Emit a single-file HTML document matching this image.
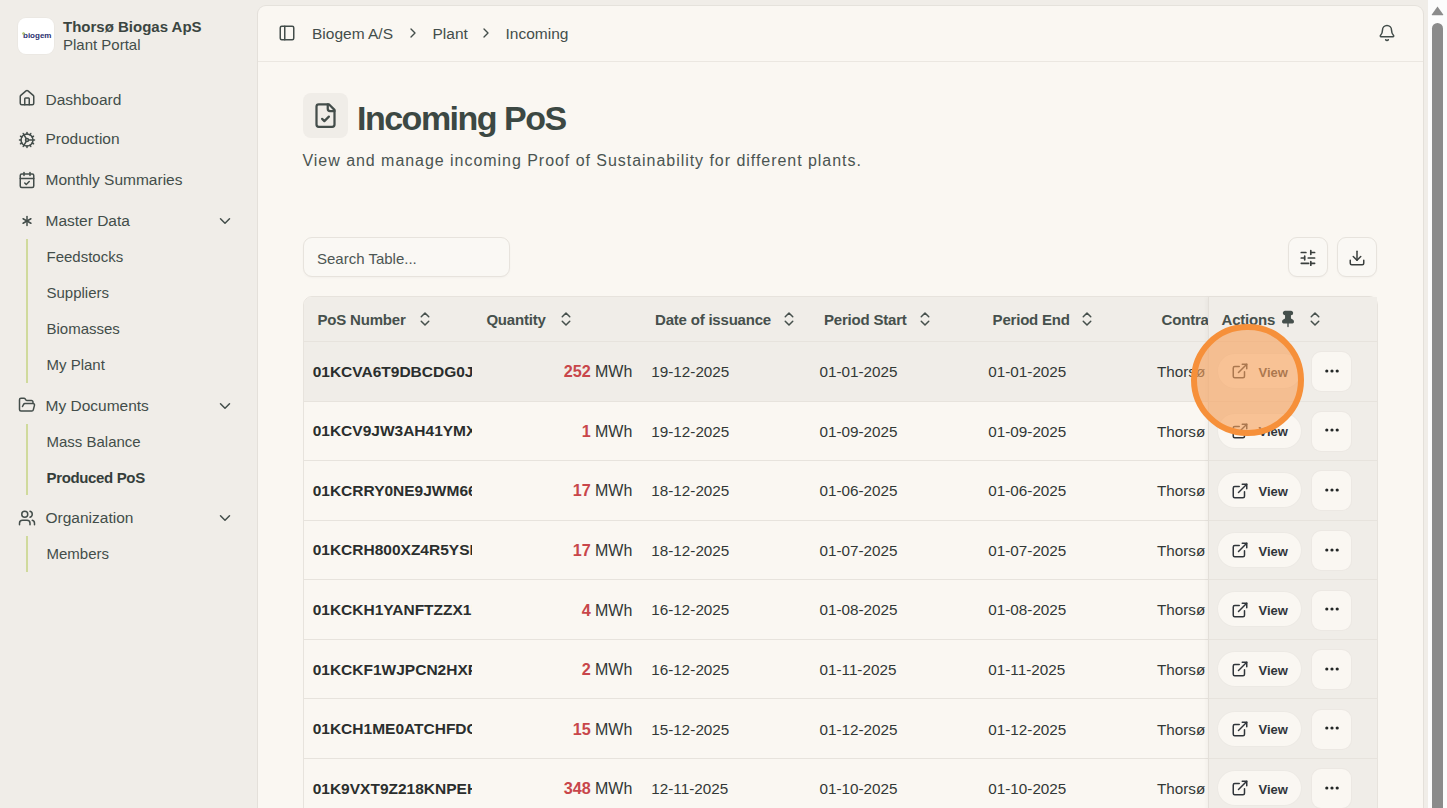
<!DOCTYPE html>
<html><head><meta charset="utf-8"><title>Incoming PoS</title>
<style>
html,body{margin:0;padding:0;}
body{width:1447px;height:808px;overflow:hidden;position:relative;background:#f0ede8;font-family:"Liberation Sans", sans-serif;}
.t{position:absolute;white-space:nowrap;}
.box{position:absolute;box-sizing:border-box;}
.ic{position:absolute;overflow:visible;}
.clip{position:absolute;overflow:hidden;}
</style></head><body>
<div class="box" style="left:18px;top:18px;width:36px;height:36px;border-radius:8px;background:#fff;box-shadow:0 0 0 1px rgba(0,0,0,0.02)"></div>
<div class="t" style="left:23px;top:30px;font-size:8px;line-height:12px;font-weight:700;color:#2a3070;letter-spacing:0px">biogem</div>
<div class="box" style="left:21.5px;top:32px;width:3px;height:3px;border-radius:50%;border:0.8px solid #a8d060"></div>
<div class="t" style="left:63.00px;top:16.70px;font-size:15px;line-height:20px;font-weight:700;color:#3b4541;letter-spacing:0px;">Thorsø Biogas ApS</div>
<div class="t" style="left:63.00px;top:34.50px;font-size:15px;line-height:20px;font-weight:400;color:#434d4a;letter-spacing:0px;">Plant Portal</div>
<div class="t" style="left:45.50px;top:89.73px;font-size:15.5px;line-height:20px;font-weight:400;color:#434d4a;letter-spacing:0px;">Dashboard</div>
<svg class="ic" style="left:18.00px;top:89.40px" width="18" height="18" viewBox="0 0 24 24" fill="none" stroke="#434d4a" stroke-width="2" stroke-linecap="round" stroke-linejoin="round"><path d="M15 21v-8a1 1 0 0 0-1-1h-4a1 1 0 0 0-1 1v8"/><path d="M3 10a2 2 0 0 1 .709-1.528l7-5.999a2 2 0 0 1 2.582 0l7 5.999A2 2 0 0 1 21 10v9a2 2 0 0 1-2 2H5a2 2 0 0 1-2-2z"/></svg>
<div class="t" style="left:45.50px;top:129.23px;font-size:15.5px;line-height:20px;font-weight:400;color:#434d4a;letter-spacing:0px;">Production</div>
<svg class="ic" style="left:18.00px;top:130.80px" width="18" height="18" viewBox="0 0 24 24" fill="none" stroke="#434d4a" stroke-width="2" stroke-linecap="round" stroke-linejoin="round"><path d="M12 20a8 8 0 1 0 0-16 8 8 0 0 0 0 16Z"/><path d="M12 14a2 2 0 1 0 0-4 2 2 0 0 0 0 4Z"/><path d="M12 2v2"/><path d="M12 22v-2"/><path d="m17 20.66-1-1.73"/><path d="M11 10.27 7 3.34"/><path d="m20.66 17-1.730-1"/><path d="m3.34 7 1.73 1"/><path d="M14 12h8"/><path d="M2 12h2"/><path d="m20.66 7-1.73 1"/><path d="m3.34 17 1.73-1"/><path d="m17 3.34-1 1.73"/><path d="m11 13.73-4 6.93"/></svg>
<div class="t" style="left:45.50px;top:170.23px;font-size:15.5px;line-height:20px;font-weight:400;color:#434d4a;letter-spacing:0px;">Monthly Summaries</div>
<svg class="ic" style="left:18.00px;top:170.90px" width="18" height="18" viewBox="0 0 24 24" fill="none" stroke="#434d4a" stroke-width="2" stroke-linecap="round" stroke-linejoin="round"><path d="M8 2v4"/><path d="M16 2v4"/><rect width="18" height="18" x="3" y="4" rx="2"/><path d="M3 10h18"/><path d="m9 16 2 2 4-4"/></svg>
<div class="t" style="left:45.50px;top:210.63px;font-size:15.5px;line-height:20px;font-weight:400;color:#434d4a;letter-spacing:0px;">Master Data</div>
<svg class="ic" style="left:18.00px;top:211.80px" width="18" height="18" viewBox="0 0 24 24" fill="none" stroke="#434d4a" stroke-width="2" stroke-linecap="round" stroke-linejoin="round"><path d="M12 6v12"/><path d="M17.196 9 6.804 15"/><path d="m6.804 9 10.392 6"/></svg>
<svg class="ic" style="left:216.00px;top:211.70px" width="18" height="18" viewBox="0 0 24 24" fill="none" stroke="#434d4a" stroke-width="2" stroke-linecap="round" stroke-linejoin="round"><path d="m6 9 6 6 6-6"/></svg>
<div class="t" style="left:45.50px;top:395.63px;font-size:15.5px;line-height:20px;font-weight:400;color:#434d4a;letter-spacing:0px;">My Documents</div>
<svg class="ic" style="left:18.00px;top:395.60px" width="18" height="18" viewBox="0 0 24 24" fill="none" stroke="#434d4a" stroke-width="2" stroke-linecap="round" stroke-linejoin="round"><path d="m6 14 1.45-2.9A2 2 0 0 1 9.24 10H20a2 2 0 0 1 1.94 2.5l-1.55 6a2 2 0 0 1-1.94 1.5H4a2 2 0 0 1-2-2V5a2 2 0 0 1 2-2h3.9a2 2 0 0 1 1.69.9l.81 1.2a2 2 0 0 0 1.67.9H18a2 2 0 0 1 2 2v2"/></svg>
<svg class="ic" style="left:216.00px;top:396.70px" width="18" height="18" viewBox="0 0 24 24" fill="none" stroke="#434d4a" stroke-width="2" stroke-linecap="round" stroke-linejoin="round"><path d="m6 9 6 6 6-6"/></svg>
<div class="t" style="left:45.50px;top:507.63px;font-size:15.5px;line-height:20px;font-weight:400;color:#434d4a;letter-spacing:0px;">Organization</div>
<svg class="ic" style="left:18.00px;top:509.00px" width="18" height="18" viewBox="0 0 24 24" fill="none" stroke="#434d4a" stroke-width="2" stroke-linecap="round" stroke-linejoin="round"><path d="M16 21v-2a4 4 0 0 0-4-4H6a4 4 0 0 0-4 4v2"/><circle cx="9" cy="7" r="4"/><path d="M22 21v-2a4 4 0 0 0-3-3.87"/><path d="M16 3.13a4 4 0 0 1 0 7.75"/></svg>
<svg class="ic" style="left:216.00px;top:508.70px" width="18" height="18" viewBox="0 0 24 24" fill="none" stroke="#434d4a" stroke-width="2" stroke-linecap="round" stroke-linejoin="round"><path d="m6 9 6 6 6-6"/></svg>
<div class="t" style="left:46.50px;top:247.00px;font-size:15px;line-height:20px;font-weight:400;color:#434d4a;letter-spacing:0px;">Feedstocks</div>
<div class="t" style="left:46.50px;top:283.00px;font-size:15px;line-height:20px;font-weight:400;color:#434d4a;letter-spacing:0px;">Suppliers</div>
<div class="t" style="left:46.50px;top:319.00px;font-size:15px;line-height:20px;font-weight:400;color:#434d4a;letter-spacing:0px;">Biomasses</div>
<div class="t" style="left:46.50px;top:355.20px;font-size:15px;line-height:20px;font-weight:400;color:#434d4a;letter-spacing:0px;">My Plant</div>
<div class="t" style="left:46.50px;top:432.30px;font-size:15px;line-height:20px;font-weight:400;color:#434d4a;letter-spacing:0px;">Mass Balance</div>
<div class="t" style="left:46.50px;top:468.30px;font-size:15px;line-height:20px;font-weight:700;color:#353e3b;letter-spacing:-0.35px;">Produced PoS</div>
<div class="t" style="left:46.50px;top:543.90px;font-size:15px;line-height:20px;font-weight:400;color:#434d4a;letter-spacing:0px;">Members</div>
<div class="box" style="left:26px;top:239px;width:2px;height:143.5px;background:#d0da9c"></div>
<div class="box" style="left:26px;top:423.5px;width:2px;height:71.5px;background:#d0da9c"></div>
<div class="box" style="left:26px;top:535.5px;width:2px;height:36.0px;background:#d0da9c"></div>
<div class="box" style="left:258px;top:6px;width:1165px;height:900px;border-radius:8px;background:#faf7f2;box-shadow:0 0 0 1px rgba(60,50,30,0.06),0 1px 2px rgba(60,50,30,0.04)"></div>
<div class="box" style="left:258px;top:61px;width:1165px;height:1px;background:#ebe7e1"></div>
<svg class="ic" style="left:278.00px;top:23.60px" width="18" height="18" viewBox="0 0 24 24" fill="none" stroke="#434d4a" stroke-width="2" stroke-linecap="round" stroke-linejoin="round"><rect width="18" height="18" x="3" y="3" rx="2"/><path d="M9 3v18"/></svg>
<div class="t" style="left:312.00px;top:23.93px;font-size:15.5px;line-height:20px;font-weight:400;color:#434d4a;letter-spacing:0px;">Biogem A/S</div>
<svg class="ic" style="left:405.00px;top:25.00px" width="16" height="16" viewBox="0 0 24 24" fill="none" stroke="#434d4a" stroke-width="2" stroke-linecap="round" stroke-linejoin="round"><path d="m9 18 6-6-6-6"/></svg>
<div class="t" style="left:432.50px;top:23.93px;font-size:15.5px;line-height:20px;font-weight:400;color:#434d4a;letter-spacing:0px;">Plant</div>
<svg class="ic" style="left:478.00px;top:25.00px" width="16" height="16" viewBox="0 0 24 24" fill="none" stroke="#434d4a" stroke-width="2" stroke-linecap="round" stroke-linejoin="round"><path d="m9 18 6-6-6-6"/></svg>
<div class="t" style="left:505.50px;top:23.93px;font-size:15.5px;line-height:20px;font-weight:400;color:#434d4a;letter-spacing:0px;">Incoming</div>
<svg class="ic" style="left:1378.00px;top:23.70px" width="18" height="18" viewBox="0 0 24 24" fill="none" stroke="#434d4a" stroke-width="2" stroke-linecap="round" stroke-linejoin="round"><path d="M10.268 21a2 2 0 0 0 3.464 0"/><path d="M3.262 15.326A1 1 0 0 0 4 17h16a1 1 0 0 0 .74-1.673C19.41 13.956 18 12.499 18 8A6 6 0 0 0 6 8c0 4.499-1.411 5.956-2.738 7.326"/></svg>
<div class="box" style="left:303px;top:93px;width:45px;height:45px;border-radius:8px;background:#f0ede8"></div>
<svg class="ic" style="left:312.10px;top:102.00px" width="27" height="27" viewBox="0 0 24 24" fill="none" stroke="#434d4a" stroke-width="2" stroke-linecap="round" stroke-linejoin="round"><path d="M15 2H6a2 2 0 0 0-2 2v16a2 2 0 0 0 2 2h12a2 2 0 0 0 2-2V7Z"/><path d="M14 2v4a2 2 0 0 0 2 2h4"/><path d="m9 15 2 2 4-4"/></svg>
<div class="t" style="left:357.00px;top:96.12px;font-size:34px;line-height:44px;font-weight:700;color:#3c4843;letter-spacing:-1.5px;">Incoming PoS</div>
<div class="t" style="left:302.50px;top:150.26px;font-size:16px;line-height:21px;font-weight:400;color:#4a5451;letter-spacing:0.96px;">View and manage incoming Proof of Sustainability for different plants.</div>
<div class="box" style="left:303px;top:237px;width:207px;height:40px;border-radius:9px;border:1px solid #e7e3dd;background:#faf8f4;box-shadow:0 1px 2px rgba(0,0,0,0.03)"></div>
<div class="t" style="left:317.00px;top:248.70px;font-size:15px;line-height:20px;font-weight:400;color:#4d5653;letter-spacing:0px;">Search Table...</div>
<div class="box" style="left:1288px;top:237px;width:40px;height:40px;border-radius:9px;border:1px solid #e7e3dd;background:#faf8f4;box-shadow:0 1px 2px rgba(0,0,0,0.03)"></div>
<div class="box" style="left:1337px;top:237px;width:40px;height:40px;border-radius:9px;border:1px solid #e7e3dd;background:#faf8f4;box-shadow:0 1px 2px rgba(0,0,0,0.03)"></div>
<svg class="ic" style="left:1288px;top:237px" width="40" height="40" viewBox="0 0 40 40" fill="none" stroke="#3a3f3d" stroke-width="1.7" stroke-linecap="round"><path d="M13.3 15.5h4.6M22.8 15.5h3.8M22.8 13.7v3.6"/><path d="M13.3 21h3.4M20.3 21h6.3M16.7 19.2v3.6"/><path d="M13.3 26.3h7.3M22.8 26.3h3.8M22.8 24.6v3.6"/></svg>
<svg class="ic" style="left:1348.00px;top:248.80px" width="18" height="18" viewBox="0 0 24 24" fill="none" stroke="#3a3f3d" stroke-width="2" stroke-linecap="round" stroke-linejoin="round"><path d="M21 15v4a2 2 0 0 1-2 2H5a2 2 0 0 1-2-2v-4"/><path d="m7 10 5 5 5-5"/><path d="M12 15V3"/></svg>
<div class="box" style="left:303px;top:296px;width:1075px;height:600px;border-radius:9px 9px 0 0;border:1px solid #e7e3dd;background:#faf7f2;box-sizing:border-box"></div>
<div class="box" style="left:304px;top:297px;width:1073px;height:44px;border-radius:8px 8px 0 0;background:#f0ede8"></div>
<div class="box" style="left:304px;top:341px;width:1073px;height:1px;background:#e7e3dd"></div>
<div class="box" style="left:304px;top:342px;width:1073px;height:58.57px;background:#f0ede8"></div>
<div class="box" style="left:304px;top:400.57px;width:1073px;height:1px;background:#e7e3dd"></div>
<div class="box" style="left:304px;top:460.14px;width:1073px;height:1px;background:#e7e3dd"></div>
<div class="box" style="left:304px;top:519.71px;width:1073px;height:1px;background:#e7e3dd"></div>
<div class="box" style="left:304px;top:579.29px;width:1073px;height:1px;background:#e7e3dd"></div>
<div class="box" style="left:304px;top:638.86px;width:1073px;height:1px;background:#e7e3dd"></div>
<div class="box" style="left:304px;top:698.43px;width:1073px;height:1px;background:#e7e3dd"></div>
<div class="box" style="left:304px;top:758.00px;width:1073px;height:1px;background:#e7e3dd"></div>
<div class="t" style="left:317.50px;top:310.00px;font-size:15px;line-height:20px;font-weight:700;color:#46504c;letter-spacing:-0.2px;">PoS Number</div>
<svg class="ic" style="left:416.20px;top:310.00px" width="18" height="18" viewBox="0 0 24 24" fill="none" stroke="#46504c" stroke-width="2" stroke-linecap="round" stroke-linejoin="round"><path d="m7 15 5 5 5-5"/><path d="m7 9 5-5 5 5"/></svg>
<div class="t" style="left:486.40px;top:310.00px;font-size:15px;line-height:20px;font-weight:700;color:#46504c;letter-spacing:-0.2px;">Quantity</div>
<svg class="ic" style="left:557.00px;top:310.00px" width="18" height="18" viewBox="0 0 24 24" fill="none" stroke="#46504c" stroke-width="2" stroke-linecap="round" stroke-linejoin="round"><path d="m7 15 5 5 5-5"/><path d="m7 9 5-5 5 5"/></svg>
<div class="t" style="left:655.00px;top:310.00px;font-size:15px;line-height:20px;font-weight:700;color:#46504c;letter-spacing:-0.2px;">Date of issuance</div>
<svg class="ic" style="left:780.00px;top:310.00px" width="18" height="18" viewBox="0 0 24 24" fill="none" stroke="#46504c" stroke-width="2" stroke-linecap="round" stroke-linejoin="round"><path d="m7 15 5 5 5-5"/><path d="m7 9 5-5 5 5"/></svg>
<div class="t" style="left:824.00px;top:310.00px;font-size:15px;line-height:20px;font-weight:700;color:#46504c;letter-spacing:-0.2px;">Period Start</div>
<svg class="ic" style="left:916.00px;top:310.00px" width="18" height="18" viewBox="0 0 24 24" fill="none" stroke="#46504c" stroke-width="2" stroke-linecap="round" stroke-linejoin="round"><path d="m7 15 5 5 5-5"/><path d="m7 9 5-5 5 5"/></svg>
<div class="t" style="left:992.60px;top:310.00px;font-size:15px;line-height:20px;font-weight:700;color:#46504c;letter-spacing:-0.2px;">Period End</div>
<svg class="ic" style="left:1078.00px;top:310.00px" width="18" height="18" viewBox="0 0 24 24" fill="none" stroke="#46504c" stroke-width="2" stroke-linecap="round" stroke-linejoin="round"><path d="m7 15 5 5 5-5"/><path d="m7 9 5-5 5 5"/></svg>
<div class="clip" style="left:1148px;top:300px;width:60px;height:40px">
<div class="t" style="left:13.60px;top:10.00px;font-size:15px;line-height:20px;font-weight:700;color:#46504c;letter-spacing:-0.2px;">Contract</div>
</div>
<div class="clip" style="left:304px;top:343.00px;width:168px;height:55.57px">
<div class="t" style="left:8.70px;top:18.71px;font-size:15.5px;line-height:20px;font-weight:700;color:#2a2e2d;letter-spacing:0px;">01KCVA6T9DBCDG0JIXQ</div>
</div>
<div class="t" style="left:472px;width:160.3px;top:361.25px;line-height:20px;font-size:15.4px;text-align:right;color:#323836"><b style="color:#c8464a;font-size:16.2px">252</b> <span style="margin-left:0px;font-size:16px">MWh</span></div>
<div class="t" style="left:651.30px;top:362.20px;font-size:15.25px;line-height:20px;font-weight:400;color:#323836;letter-spacing:0px;">19-12-2025</div>
<div class="t" style="left:819.50px;top:362.20px;font-size:15.25px;line-height:20px;font-weight:400;color:#323836;letter-spacing:0px;">01-01-2025</div>
<div class="t" style="left:988.30px;top:362.20px;font-size:15.25px;line-height:20px;font-weight:400;color:#323836;letter-spacing:0px;">01-01-2025</div>
<div class="clip" style="left:1148px;top:343.00px;width:60px;height:55.57px">
<div class="t" style="left:9.00px;top:19.20px;font-size:15.25px;line-height:20px;font-weight:400;color:#323836;letter-spacing:0px;">Thorsø Biogas</div>
</div>
<div class="clip" style="left:304px;top:402.57px;width:168px;height:55.57px">
<div class="t" style="left:8.70px;top:18.71px;font-size:15.5px;line-height:20px;font-weight:700;color:#2a2e2d;letter-spacing:0px;">01KCV9JW3AH41YMXQ</div>
</div>
<div class="t" style="left:472px;width:160.3px;top:420.82px;line-height:20px;font-size:15.4px;text-align:right;color:#323836"><b style="color:#c8464a;font-size:16.2px">1</b> <span style="margin-left:0px;font-size:16px">MWh</span></div>
<div class="t" style="left:651.30px;top:421.77px;font-size:15.25px;line-height:20px;font-weight:400;color:#323836;letter-spacing:0px;">19-12-2025</div>
<div class="t" style="left:819.50px;top:421.77px;font-size:15.25px;line-height:20px;font-weight:400;color:#323836;letter-spacing:0px;">01-09-2025</div>
<div class="t" style="left:988.30px;top:421.77px;font-size:15.25px;line-height:20px;font-weight:400;color:#323836;letter-spacing:0px;">01-09-2025</div>
<div class="clip" style="left:1148px;top:402.57px;width:60px;height:55.57px">
<div class="t" style="left:9.00px;top:19.20px;font-size:15.25px;line-height:20px;font-weight:400;color:#323836;letter-spacing:0px;">Thorsø Biogas</div>
</div>
<div class="clip" style="left:304px;top:462.14px;width:168px;height:55.57px">
<div class="t" style="left:8.70px;top:18.71px;font-size:15.5px;line-height:20px;font-weight:700;color:#2a2e2d;letter-spacing:0px;">01KCRRY0NE9JWM66Q</div>
</div>
<div class="t" style="left:472px;width:160.3px;top:480.39px;line-height:20px;font-size:15.4px;text-align:right;color:#323836"><b style="color:#c8464a;font-size:16.2px">17</b> <span style="margin-left:0px;font-size:16px">MWh</span></div>
<div class="t" style="left:651.30px;top:481.34px;font-size:15.25px;line-height:20px;font-weight:400;color:#323836;letter-spacing:0px;">18-12-2025</div>
<div class="t" style="left:819.50px;top:481.34px;font-size:15.25px;line-height:20px;font-weight:400;color:#323836;letter-spacing:0px;">01-06-2025</div>
<div class="t" style="left:988.30px;top:481.34px;font-size:15.25px;line-height:20px;font-weight:400;color:#323836;letter-spacing:0px;">01-06-2025</div>
<div class="clip" style="left:1148px;top:462.14px;width:60px;height:55.57px">
<div class="t" style="left:9.00px;top:19.20px;font-size:15.25px;line-height:20px;font-weight:400;color:#323836;letter-spacing:0px;">Thorsø Biogas</div>
</div>
<div class="clip" style="left:304px;top:521.71px;width:168px;height:55.57px">
<div class="t" style="left:8.70px;top:18.71px;font-size:15.5px;line-height:20px;font-weight:700;color:#2a2e2d;letter-spacing:0px;">01KCRH800XZ4R5YSHQ</div>
</div>
<div class="t" style="left:472px;width:160.3px;top:539.96px;line-height:20px;font-size:15.4px;text-align:right;color:#323836"><b style="color:#c8464a;font-size:16.2px">17</b> <span style="margin-left:0px;font-size:16px">MWh</span></div>
<div class="t" style="left:651.30px;top:540.92px;font-size:15.25px;line-height:20px;font-weight:400;color:#323836;letter-spacing:0px;">18-12-2025</div>
<div class="t" style="left:819.50px;top:540.92px;font-size:15.25px;line-height:20px;font-weight:400;color:#323836;letter-spacing:0px;">01-07-2025</div>
<div class="t" style="left:988.30px;top:540.92px;font-size:15.25px;line-height:20px;font-weight:400;color:#323836;letter-spacing:0px;">01-07-2025</div>
<div class="clip" style="left:1148px;top:521.71px;width:60px;height:55.57px">
<div class="t" style="left:9.00px;top:19.20px;font-size:15.25px;line-height:20px;font-weight:400;color:#323836;letter-spacing:0px;">Thorsø Biogas</div>
</div>
<div class="clip" style="left:304px;top:581.29px;width:168px;height:55.57px">
<div class="t" style="left:8.70px;top:18.71px;font-size:15.5px;line-height:20px;font-weight:700;color:#2a2e2d;letter-spacing:0px;">01KCKH1YANFTZZX1RQ</div>
</div>
<div class="t" style="left:472px;width:160.3px;top:599.54px;line-height:20px;font-size:15.4px;text-align:right;color:#323836"><b style="color:#c8464a;font-size:16.2px">4</b> <span style="margin-left:0px;font-size:16px">MWh</span></div>
<div class="t" style="left:651.30px;top:600.49px;font-size:15.25px;line-height:20px;font-weight:400;color:#323836;letter-spacing:0px;">16-12-2025</div>
<div class="t" style="left:819.50px;top:600.49px;font-size:15.25px;line-height:20px;font-weight:400;color:#323836;letter-spacing:0px;">01-08-2025</div>
<div class="t" style="left:988.30px;top:600.49px;font-size:15.25px;line-height:20px;font-weight:400;color:#323836;letter-spacing:0px;">01-08-2025</div>
<div class="clip" style="left:1148px;top:581.29px;width:60px;height:55.57px">
<div class="t" style="left:9.00px;top:19.20px;font-size:15.25px;line-height:20px;font-weight:400;color:#323836;letter-spacing:0px;">Thorsø Biogas</div>
</div>
<div class="clip" style="left:304px;top:640.86px;width:168px;height:55.57px">
<div class="t" style="left:8.70px;top:18.71px;font-size:15.5px;line-height:20px;font-weight:700;color:#2a2e2d;letter-spacing:0px;">01KCKF1WJPCN2HXPQ</div>
</div>
<div class="t" style="left:472px;width:160.3px;top:659.11px;line-height:20px;font-size:15.4px;text-align:right;color:#323836"><b style="color:#c8464a;font-size:16.2px">2</b> <span style="margin-left:0px;font-size:16px">MWh</span></div>
<div class="t" style="left:651.30px;top:660.06px;font-size:15.25px;line-height:20px;font-weight:400;color:#323836;letter-spacing:0px;">16-12-2025</div>
<div class="t" style="left:819.50px;top:660.06px;font-size:15.25px;line-height:20px;font-weight:400;color:#323836;letter-spacing:0px;">01-11-2025</div>
<div class="t" style="left:988.30px;top:660.06px;font-size:15.25px;line-height:20px;font-weight:400;color:#323836;letter-spacing:0px;">01-11-2025</div>
<div class="clip" style="left:1148px;top:640.86px;width:60px;height:55.57px">
<div class="t" style="left:9.00px;top:19.20px;font-size:15.25px;line-height:20px;font-weight:400;color:#323836;letter-spacing:0px;">Thorsø Biogas</div>
</div>
<div class="clip" style="left:304px;top:700.43px;width:168px;height:55.57px">
<div class="t" style="left:8.70px;top:18.71px;font-size:15.5px;line-height:20px;font-weight:700;color:#2a2e2d;letter-spacing:0px;">01KCH1ME0ATCHFDCQ</div>
</div>
<div class="t" style="left:472px;width:160.3px;top:718.68px;line-height:20px;font-size:15.4px;text-align:right;color:#323836"><b style="color:#c8464a;font-size:16.2px">15</b> <span style="margin-left:0px;font-size:16px">MWh</span></div>
<div class="t" style="left:651.30px;top:719.63px;font-size:15.25px;line-height:20px;font-weight:400;color:#323836;letter-spacing:0px;">15-12-2025</div>
<div class="t" style="left:819.50px;top:719.63px;font-size:15.25px;line-height:20px;font-weight:400;color:#323836;letter-spacing:0px;">01-12-2025</div>
<div class="t" style="left:988.30px;top:719.63px;font-size:15.25px;line-height:20px;font-weight:400;color:#323836;letter-spacing:0px;">01-12-2025</div>
<div class="clip" style="left:1148px;top:700.43px;width:60px;height:55.57px">
<div class="t" style="left:9.00px;top:19.20px;font-size:15.25px;line-height:20px;font-weight:400;color:#323836;letter-spacing:0px;">Thorsø Biogas</div>
</div>
<div class="clip" style="left:304px;top:760.00px;width:168px;height:55.57px">
<div class="t" style="left:8.70px;top:18.71px;font-size:15.5px;line-height:20px;font-weight:700;color:#2a2e2d;letter-spacing:0px;">01K9VXT9Z218KNPEHQ</div>
</div>
<div class="t" style="left:472px;width:160.3px;top:778.25px;line-height:20px;font-size:15.4px;text-align:right;color:#323836"><b style="color:#c8464a;font-size:16.2px">348</b> <span style="margin-left:0px;font-size:16px">MWh</span></div>
<div class="t" style="left:651.30px;top:779.20px;font-size:15.25px;line-height:20px;font-weight:400;color:#323836;letter-spacing:0px;">12-11-2025</div>
<div class="t" style="left:819.50px;top:779.20px;font-size:15.25px;line-height:20px;font-weight:400;color:#323836;letter-spacing:0px;">01-10-2025</div>
<div class="t" style="left:988.30px;top:779.20px;font-size:15.25px;line-height:20px;font-weight:400;color:#323836;letter-spacing:0px;">01-10-2025</div>
<div class="clip" style="left:1148px;top:760.00px;width:60px;height:55.57px">
<div class="t" style="left:9.00px;top:19.20px;font-size:15.25px;line-height:20px;font-weight:400;color:#323836;letter-spacing:0px;">Thorsø Biogas</div>
</div>
<div class="box" style="left:1208px;top:297px;width:169px;height:600px;background:#f0ede8;border-left:1px solid #e3dfd9;box-shadow:-2px 0 4px rgba(0,0,0,0.03)"></div>
<div class="box" style="left:1208px;top:297px;width:169px;height:44px;border-top-right-radius:8px;background:#f0ede8;border-left:1px solid #e3dfd9"></div>
<div class="box" style="left:1209px;top:341px;width:168px;height:1px;background:#e7e3dd"></div>
<div class="box" style="left:1209px;top:400.57px;width:168px;height:1px;background:#e7e3dd"></div>
<div class="box" style="left:1209px;top:460.14px;width:168px;height:1px;background:#e7e3dd"></div>
<div class="box" style="left:1209px;top:519.71px;width:168px;height:1px;background:#e7e3dd"></div>
<div class="box" style="left:1209px;top:579.29px;width:168px;height:1px;background:#e7e3dd"></div>
<div class="box" style="left:1209px;top:638.86px;width:168px;height:1px;background:#e7e3dd"></div>
<div class="box" style="left:1209px;top:698.43px;width:168px;height:1px;background:#e7e3dd"></div>
<div class="box" style="left:1209px;top:758.00px;width:168px;height:1px;background:#e7e3dd"></div>
<div class="t" style="left:1221.50px;top:310.00px;font-size:15px;line-height:20px;font-weight:700;color:#46504c;letter-spacing:-0.2px;">Actions</div>
<svg class="ic" style="left:1279.00px;top:309.80px" width="18" height="18" viewBox="0 0 24 24" fill="#46504c" stroke="#46504c" stroke-width="1.8" stroke-linecap="round" stroke-linejoin="round"><path d="M12 17v5"/><path d="M9 10.76a2 2 0 0 1-1.11 1.79l-1.78.9A2 2 0 0 0 5 15.24V16a1 1 0 0 0 1 1h12a1 1 0 0 0 1-1v-.76a2 2 0 0 0-1.11-1.79l-1.78-.9A2 2 0 0 1 15 10.76V7a1 1 0 0 1 1-1 2 2 0 0 0 0-4H8a2 2 0 0 0 0 4 1 1 0 0 1 1 1z"/></svg>
<svg class="ic" style="left:1306.00px;top:310.00px" width="18" height="18" viewBox="0 0 24 24" fill="none" stroke="#46504c" stroke-width="2" stroke-linecap="round" stroke-linejoin="round"><path d="m7 15 5 5 5-5"/><path d="m7 9 5-5 5 5"/></svg>
<div class="box" style="left:1218px;top:354.19px;width:83px;height:34px;border-radius:17px;background:#faf7f2;box-shadow:0 0 0 1px rgba(0,0,0,0.015)"></div>
<svg class="ic" style="left:1231.00px;top:362.39px" width="18" height="18" viewBox="0 0 24 24" fill="none" stroke="#30353a" stroke-width="2" stroke-linecap="round" stroke-linejoin="round"><path d="M15 3h6v6"/><path d="M10 14 21 3"/><path d="M18 13v6a2 2 0 0 1-2 2H5a2 2 0 0 1-2-2V8a2 2 0 0 1 2-2h6"/></svg>
<div class="t" style="left:1258.50px;top:363.88px;font-size:13px;line-height:17px;font-weight:700;color:#30353a;letter-spacing:0px;">View</div>
<div class="box" style="left:1312px;top:352.29px;width:39px;height:39px;border-radius:9px;background:#faf7f2;box-shadow:0 0 0 1px rgba(80,60,30,0.025)"></div>
<svg class="ic" style="left:1322px;top:365.79px" width="20" height="10" viewBox="0 0 20 10"><circle cx="4.8" cy="5" r="1.6" fill="#232726"/><circle cx="10" cy="5" r="1.6" fill="#232726"/><circle cx="15.2" cy="5" r="1.6" fill="#232726"/></svg>
<div class="box" style="left:1218px;top:413.76px;width:83px;height:34px;border-radius:17px;background:#faf7f2;box-shadow:0 0 0 1px rgba(0,0,0,0.015)"></div>
<svg class="ic" style="left:1231.00px;top:421.96px" width="18" height="18" viewBox="0 0 24 24" fill="none" stroke="#30353a" stroke-width="2" stroke-linecap="round" stroke-linejoin="round"><path d="M15 3h6v6"/><path d="M10 14 21 3"/><path d="M18 13v6a2 2 0 0 1-2 2H5a2 2 0 0 1-2-2V8a2 2 0 0 1 2-2h6"/></svg>
<div class="t" style="left:1258.50px;top:423.45px;font-size:13px;line-height:17px;font-weight:700;color:#30353a;letter-spacing:0px;">View</div>
<div class="box" style="left:1312px;top:411.86px;width:39px;height:39px;border-radius:9px;background:#faf7f2;box-shadow:0 0 0 1px rgba(80,60,30,0.025)"></div>
<svg class="ic" style="left:1322px;top:425.36px" width="20" height="10" viewBox="0 0 20 10"><circle cx="4.8" cy="5" r="1.6" fill="#232726"/><circle cx="10" cy="5" r="1.6" fill="#232726"/><circle cx="15.2" cy="5" r="1.6" fill="#232726"/></svg>
<div class="box" style="left:1218px;top:473.33px;width:83px;height:34px;border-radius:17px;background:#faf7f2;box-shadow:0 0 0 1px rgba(0,0,0,0.015)"></div>
<svg class="ic" style="left:1231.00px;top:481.53px" width="18" height="18" viewBox="0 0 24 24" fill="none" stroke="#30353a" stroke-width="2" stroke-linecap="round" stroke-linejoin="round"><path d="M15 3h6v6"/><path d="M10 14 21 3"/><path d="M18 13v6a2 2 0 0 1-2 2H5a2 2 0 0 1-2-2V8a2 2 0 0 1 2-2h6"/></svg>
<div class="t" style="left:1258.50px;top:483.02px;font-size:13px;line-height:17px;font-weight:700;color:#30353a;letter-spacing:0px;">View</div>
<div class="box" style="left:1312px;top:471.43px;width:39px;height:39px;border-radius:9px;background:#faf7f2;box-shadow:0 0 0 1px rgba(80,60,30,0.025)"></div>
<svg class="ic" style="left:1322px;top:484.93px" width="20" height="10" viewBox="0 0 20 10"><circle cx="4.8" cy="5" r="1.6" fill="#232726"/><circle cx="10" cy="5" r="1.6" fill="#232726"/><circle cx="15.2" cy="5" r="1.6" fill="#232726"/></svg>
<div class="box" style="left:1218px;top:532.90px;width:83px;height:34px;border-radius:17px;background:#faf7f2;box-shadow:0 0 0 1px rgba(0,0,0,0.015)"></div>
<svg class="ic" style="left:1231.00px;top:541.10px" width="18" height="18" viewBox="0 0 24 24" fill="none" stroke="#30353a" stroke-width="2" stroke-linecap="round" stroke-linejoin="round"><path d="M15 3h6v6"/><path d="M10 14 21 3"/><path d="M18 13v6a2 2 0 0 1-2 2H5a2 2 0 0 1-2-2V8a2 2 0 0 1 2-2h6"/></svg>
<div class="t" style="left:1258.50px;top:542.60px;font-size:13px;line-height:17px;font-weight:700;color:#30353a;letter-spacing:0px;">View</div>
<div class="box" style="left:1312px;top:531.00px;width:39px;height:39px;border-radius:9px;background:#faf7f2;box-shadow:0 0 0 1px rgba(80,60,30,0.025)"></div>
<svg class="ic" style="left:1322px;top:544.50px" width="20" height="10" viewBox="0 0 20 10"><circle cx="4.8" cy="5" r="1.6" fill="#232726"/><circle cx="10" cy="5" r="1.6" fill="#232726"/><circle cx="15.2" cy="5" r="1.6" fill="#232726"/></svg>
<div class="box" style="left:1218px;top:592.47px;width:83px;height:34px;border-radius:17px;background:#faf7f2;box-shadow:0 0 0 1px rgba(0,0,0,0.015)"></div>
<svg class="ic" style="left:1231.00px;top:600.67px" width="18" height="18" viewBox="0 0 24 24" fill="none" stroke="#30353a" stroke-width="2" stroke-linecap="round" stroke-linejoin="round"><path d="M15 3h6v6"/><path d="M10 14 21 3"/><path d="M18 13v6a2 2 0 0 1-2 2H5a2 2 0 0 1-2-2V8a2 2 0 0 1 2-2h6"/></svg>
<div class="t" style="left:1258.50px;top:602.17px;font-size:13px;line-height:17px;font-weight:700;color:#30353a;letter-spacing:0px;">View</div>
<div class="box" style="left:1312px;top:590.57px;width:39px;height:39px;border-radius:9px;background:#faf7f2;box-shadow:0 0 0 1px rgba(80,60,30,0.025)"></div>
<svg class="ic" style="left:1322px;top:604.07px" width="20" height="10" viewBox="0 0 20 10"><circle cx="4.8" cy="5" r="1.6" fill="#232726"/><circle cx="10" cy="5" r="1.6" fill="#232726"/><circle cx="15.2" cy="5" r="1.6" fill="#232726"/></svg>
<div class="box" style="left:1218px;top:652.04px;width:83px;height:34px;border-radius:17px;background:#faf7f2;box-shadow:0 0 0 1px rgba(0,0,0,0.015)"></div>
<svg class="ic" style="left:1231.00px;top:660.24px" width="18" height="18" viewBox="0 0 24 24" fill="none" stroke="#30353a" stroke-width="2" stroke-linecap="round" stroke-linejoin="round"><path d="M15 3h6v6"/><path d="M10 14 21 3"/><path d="M18 13v6a2 2 0 0 1-2 2H5a2 2 0 0 1-2-2V8a2 2 0 0 1 2-2h6"/></svg>
<div class="t" style="left:1258.50px;top:661.74px;font-size:13px;line-height:17px;font-weight:700;color:#30353a;letter-spacing:0px;">View</div>
<div class="box" style="left:1312px;top:650.14px;width:39px;height:39px;border-radius:9px;background:#faf7f2;box-shadow:0 0 0 1px rgba(80,60,30,0.025)"></div>
<svg class="ic" style="left:1322px;top:663.64px" width="20" height="10" viewBox="0 0 20 10"><circle cx="4.8" cy="5" r="1.6" fill="#232726"/><circle cx="10" cy="5" r="1.6" fill="#232726"/><circle cx="15.2" cy="5" r="1.6" fill="#232726"/></svg>
<div class="box" style="left:1218px;top:711.61px;width:83px;height:34px;border-radius:17px;background:#faf7f2;box-shadow:0 0 0 1px rgba(0,0,0,0.015)"></div>
<svg class="ic" style="left:1231.00px;top:719.81px" width="18" height="18" viewBox="0 0 24 24" fill="none" stroke="#30353a" stroke-width="2" stroke-linecap="round" stroke-linejoin="round"><path d="M15 3h6v6"/><path d="M10 14 21 3"/><path d="M18 13v6a2 2 0 0 1-2 2H5a2 2 0 0 1-2-2V8a2 2 0 0 1 2-2h6"/></svg>
<div class="t" style="left:1258.50px;top:721.31px;font-size:13px;line-height:17px;font-weight:700;color:#30353a;letter-spacing:0px;">View</div>
<div class="box" style="left:1312px;top:709.71px;width:39px;height:39px;border-radius:9px;background:#faf7f2;box-shadow:0 0 0 1px rgba(80,60,30,0.025)"></div>
<svg class="ic" style="left:1322px;top:723.21px" width="20" height="10" viewBox="0 0 20 10"><circle cx="4.8" cy="5" r="1.6" fill="#232726"/><circle cx="10" cy="5" r="1.6" fill="#232726"/><circle cx="15.2" cy="5" r="1.6" fill="#232726"/></svg>
<div class="box" style="left:1218px;top:771.19px;width:83px;height:34px;border-radius:17px;background:#faf7f2;box-shadow:0 0 0 1px rgba(0,0,0,0.015)"></div>
<svg class="ic" style="left:1231.00px;top:779.39px" width="18" height="18" viewBox="0 0 24 24" fill="none" stroke="#30353a" stroke-width="2" stroke-linecap="round" stroke-linejoin="round"><path d="M15 3h6v6"/><path d="M10 14 21 3"/><path d="M18 13v6a2 2 0 0 1-2 2H5a2 2 0 0 1-2-2V8a2 2 0 0 1 2-2h6"/></svg>
<div class="t" style="left:1258.50px;top:780.88px;font-size:13px;line-height:17px;font-weight:700;color:#30353a;letter-spacing:0px;">View</div>
<div class="box" style="left:1312px;top:769.29px;width:39px;height:39px;border-radius:9px;background:#faf7f2;box-shadow:0 0 0 1px rgba(80,60,30,0.025)"></div>
<svg class="ic" style="left:1322px;top:782.79px" width="20" height="10" viewBox="0 0 20 10"><circle cx="4.8" cy="5" r="1.6" fill="#232726"/><circle cx="10" cy="5" r="1.6" fill="#232726"/><circle cx="15.2" cy="5" r="1.6" fill="#232726"/></svg>
<div class="box" style="left:1191.3px;top:323.9px;width:112.6px;height:112.6px;border-radius:50%;border:6px solid #f6903a;background:rgba(247,162,92,0.62)"></div>
<div class="box" style="left:1428px;top:0;width:19px;height:808px;background:#fcfcfc"></div>
<div class="box" style="left:1432px;top:23px;width:11px;height:800px;border-radius:5.5px 5.5px 0 0;background:#8b8b8b"></div>
<svg class="ic" style="left:1428px;top:0" width="19" height="20" viewBox="0 0 19 20"><path d="M9.5 6.4 L15.2 14.6 Q15.6 15.3 14.8 15.3 L4.2 15.3 Q3.4 15.3 3.8 14.6 Z" fill="#8b8b8b"/></svg>
</body></html>
